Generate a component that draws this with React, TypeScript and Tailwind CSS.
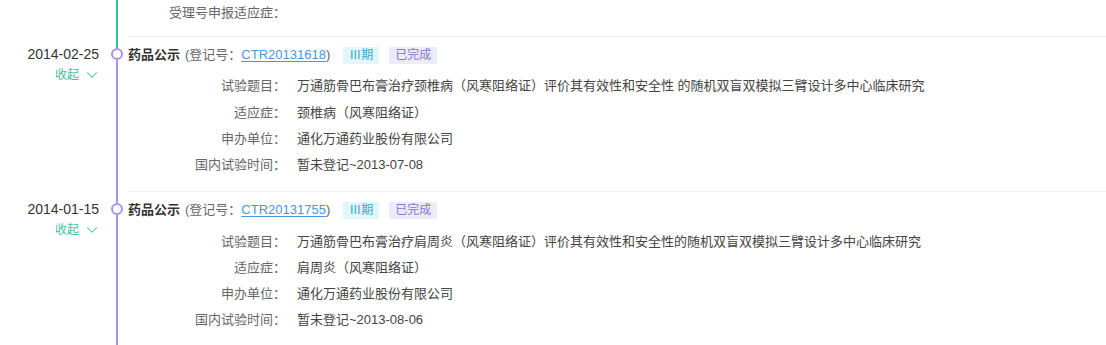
import { ChevronDown } from "lucide-react";

type Row = { label: string; value: string };

interface Entry {
  date: string;
  regNo: string;
  rows: Row[];
}

const entries: Entry[] = [
  {
    date: "2014-02-25",
    regNo: "CTR20131618",
    rows: [
      {
        label: "试验题目：",
        value:
          "万通筋骨巴布膏治疗颈椎病（风寒阻络证）评价其有效性和安全性 的随机双盲双模拟三臂设计多中心临床研究",
      },
      { label: "适应症：", value: "颈椎病（风寒阻络证）" },
      { label: "申办单位：", value: "通化万通药业股份有限公司" },
      { label: "国内试验时间：", value: "暂未登记~2013-07-08" },
    ],
  },
  {
    date: "2014-01-15",
    regNo: "CTR20131755",
    rows: [
      {
        label: "试验题目：",
        value:
          "万通筋骨巴布膏治疗肩周炎（风寒阻络证）评价其有效性和安全性的随机双盲双模拟三臂设计多中心临床研究",
      },
      { label: "适应症：", value: "肩周炎（风寒阻络证）" },
      { label: "申办单位：", value: "通化万通药业股份有限公司" },
      { label: "国内试验时间：", value: "暂未登记~2013-08-06" },
    ],
  },
];

const font = {
  fontFamily: '"Liberation Sans", "Noto Sans CJK SC", sans-serif',
};

function InfoRow({ label, value }: Row) {
  return (
    <div className="flex h-[26.3px] items-center text-[13px]">
      <span className="w-[158px] shrink-0 text-right text-[#666]">{label}</span>
      <span className="ml-[11px] whitespace-nowrap text-[#444]">{value}</span>
    </div>
  );
}

function TimelineEntry({ entry, prevColor }: { entry: Entry; prevColor: string }) {
  return (
    <div className="flex">
      {/* Date + collapse */}
      <div className="flex w-[106px] shrink-0 flex-col items-end pr-[7px] pt-[8px]">
        <span className="text-[14px] leading-[20px] text-[#333]">{entry.date}</span>
        <span className="mt-[2px] -mr-[2px] flex items-center gap-[4px] text-[12px] leading-[18px] text-[#3dbfa3]">
          收起
          <ChevronDown size={18} strokeWidth={1.4} />
        </span>
      </div>

      {/* Timeline */}
      <div className="flex w-[22px] shrink-0 flex-col items-center">
        <div className={`h-[12px] w-[2px] ${prevColor}`} />
        <div className="h-[12px] w-[12px] shrink-0 rounded-full border-2 border-[#a993f0] bg-white" />
        <div className="w-[2px] flex-1 bg-[#a993f0]" />
      </div>

      {/* Content */}
      <div className="flex-1 border-t border-[#f0f0f0] pt-[8px] pb-[13px]">
        <div className="flex h-[20px] items-center text-[13px]">
          <span className="font-bold text-[#333]">药品公示</span>
          <span className="ml-[5px] text-[#666]">
            (登记号：
            <span className="text-[#4a95de] underline underline-offset-2">{entry.regNo}</span>)
          </span>
          <span className="ml-[13px] bg-[#e0f6fa] px-[6px] text-[12px] leading-[17px] text-[#34abc6]">
            Ⅲ期
          </span>
          <span className="ml-[10px] bg-[#ecebf8] px-[6px] text-[12px] leading-[17px] text-[#8577cf]">
            已完成
          </span>
        </div>
        <div className="mt-[8px]">
          {entry.rows.map((r) => (
            <InfoRow key={r.label} {...r} />
          ))}
        </div>
      </div>
    </div>
  );
}

export default function App() {
  return (
    <div className="h-[345px] w-full overflow-hidden bg-white" style={font}>
      {/* tail of previous entry */}
      <div className="flex">
        <div className="w-[106px] shrink-0" />
        <div className="flex w-[22px] shrink-0 justify-center">
          <div className="w-[2px] bg-[#2fc2a6]" />
        </div>
        <div className="flex-1 pb-[10px]">
          <div className="flex h-[26px] items-center text-[13px]">
            <span className="w-[158px] shrink-0 text-right text-[#666]">受理号申报适应症：</span>
          </div>
        </div>
      </div>

      {entries.map((e, i) => (
        <TimelineEntry
          key={e.regNo}
          entry={e}
          prevColor={i === 0 ? "bg-[#2fc2a6]" : "bg-[#a993f0]"}
        />
      ))}
    </div>
  );
}
